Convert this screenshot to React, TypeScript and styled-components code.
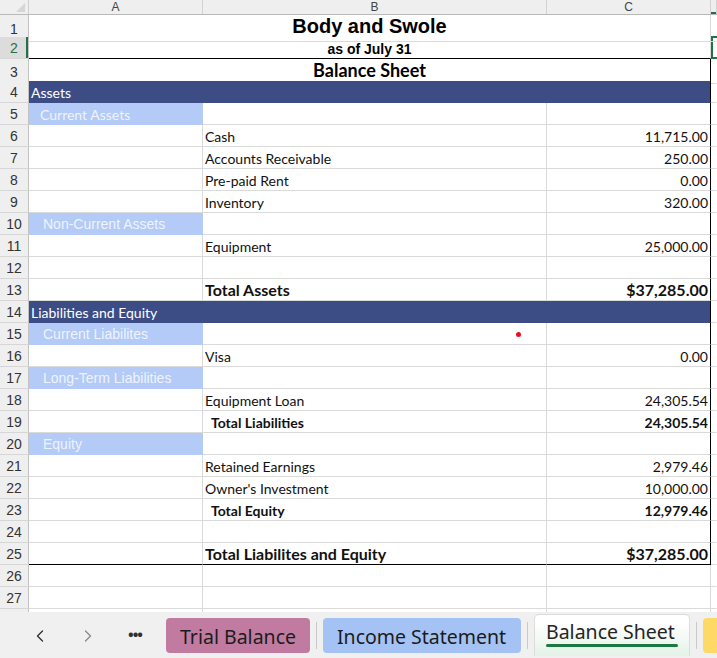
import React from "react";
import styled, { createGlobalStyle, css } from "styled-components";
import { ChevronLeft, ChevronRight } from "lucide-react";

const GlobalStyle = createGlobalStyle`
  html, body { margin: 0; padding: 0; background: #ffffff; }
  * { box-sizing: border-box; }
`;

const GRID = "#dadada";
const NAVY = "#3c4d85";
const SKY = "#b3cbf6";
const CALIBRI = `Lato, "Open Sans", sans-serif`;
const ARIAL = `"Liberation Sans", Arial, sans-serif`;

const Page = styled.div`
  width: 717px;
  height: 658px;
  display: flex;
  flex-direction: column;
  overflow: hidden;
  background: #fff;
`;

const Sheet = styled.div`
  flex: 1;
  overflow: hidden;
  display: flex;
  flex-direction: column;
`;

const cols = "29px 174px 344px 164px 1fr";

const HeaderRow = styled.div`
  display: grid;
  grid-template-columns: ${cols};
  height: 15px;
  flex: none;
  background: #efefef;
  border-bottom: 1px solid #b9b9b9;
`;

const Corner = styled.div`
  position: relative;
  border-right: 1px solid #cfcfcf;
  &::after {
    content: "";
    position: absolute;
    right: 3px;
    bottom: 2px;
    width: 0;
    height: 0;
    border-left: 9px solid transparent;
    border-bottom: 9px solid #d6d6d6;
  }
`;

const ColHead = styled.div<{ $active?: boolean }>`
  display: flex;
  align-items: center;
  justify-content: center;
  font-family: ${ARIAL};
  font-size: 12px;
  line-height: 1;
  color: #444;
  border-right: 1px solid #d2d2d2;
  ${(p) =>
    p.$active &&
    css`
      box-shadow: inset 0 -2px 0 #217346;
    `}
`;

const Row = styled.div`
  display: grid;
  grid-template-columns: ${cols};
  height: 22px;
  flex: none;
`;

const RowHead = styled.div<{ $active?: boolean }>`
  display: flex;
  align-items: center;
  justify-content: center;
  padding-top: 1px;
  font-family: ${ARIAL};
  font-size: 14px;
  color: ${(p) => (p.$active ? "#217346" : "#333")};
  background: ${(p) => (p.$active ? "#dcdcdc" : "#efefef")};
  border-right: 1px solid #c3c3c3;
  border-bottom: 1px solid #d6d6d6;
  ${(p) =>
    p.$active &&
    css`
      box-shadow: inset -2px 0 0 #217346;
    `}
`;

type CellProps = {
  $span?: number;
  $bg?: string;
  $align?: "left" | "center" | "right";
  $family?: string;
  $size?: number;
  $bold?: boolean;
  $color?: string;
  $indent?: number;
  $shift?: number;
  $bottom?: string;
  $right?: string;
};

const Cell = styled.div<CellProps>`
  position: relative;
  grid-column: span ${(p) => p.$span ?? 1};
  display: flex;
  align-items: center;
  justify-content: ${(p) =>
    p.$align === "right" ? "flex-end" : p.$align === "center" ? "center" : "flex-start"};
  padding: ${(p) => Math.max(0, 1 + (p.$shift ?? 0))}px 2px
    ${(p) => Math.max(0, -(p.$shift ?? 0))}px ${(p) => 2 + (p.$indent ?? 0)}px;
  background: ${(p) => p.$bg ?? "transparent"};
  font-family: ${(p) => p.$family ?? CALIBRI};
  font-size: ${(p) => p.$size ?? 14}px;
  font-weight: ${(p) => (p.$bold ? 700 : 400)};
  color: ${(p) => p.$color ?? "#000"};
  white-space: nowrap;
  overflow: visible;
  border-right: 1px solid ${(p) => p.$right ?? GRID};
  border-bottom: 1px solid ${(p) => p.$bottom ?? GRID};
`;

const ActiveCell = styled.div`
  border-top: 2px solid #217346;
  border-bottom: 2px solid #217346;
  border-left: 2px solid #217346;
  margin-top: -1px;
  height: 23px;
`;

const Dot = styled.span`
  position: absolute;
  left: 313px;
  top: 9px;
  width: 5px;
  height: 5px;
  border-radius: 50%;
  background: #e81123;
`;

/* Tab bar */
const TabBar = styled.div`
  height: 46px;
  flex: none;
  background: #f0f0f0;
  display: flex;
  align-items: flex-end;
  padding: 0 0 5px 28px;
  font-family: "Noto Sans", "Open Sans", sans-serif;
  overflow: hidden;
`;

const NavBtn = styled.div<{ $dim?: boolean }>`
  flex: none;
  width: 24px;
  height: 35px;
  display: flex;
  align-items: center;
  justify-content: center;
  color: ${(p) => (p.$dim ? "#8a8a8a" : "#303030")};
  margin-right: 24px;
`;

const More = styled.div`
  flex: none;
  width: 22px;
  height: 35px;
  display: flex;
  align-items: center;
  justify-content: center;
  font-size: 15px;
  letter-spacing: -1px;
  color: #303030;
  margin-right: 20px;
  padding-bottom: 4px;
  font-weight: 700;
`;

const Tab = styled.div<{ $bg: string; $w: number }>`
  height: 35px;
  width: ${(p) => p.$w}px;
  flex: none;
  border-radius: 4px;
  background: ${(p) => p.$bg};
  display: flex;
  align-items: center;
  padding: 2px 0 0 14px;
  font-size: 19.5px;
  color: #1b1b1b;
  white-space: nowrap;
  overflow: hidden;
`;

const ActiveTab = styled.div`
  position: relative;
  height: 42px;
  width: 156px;
  flex: none;
  margin-bottom: -3px;
  border: 1px solid #dcdcdc;
  border-bottom: none;
  border-radius: 5px 5px 0 0;
  background: linear-gradient(#ffffff 20%, #e4f2e7);
  display: flex;
  align-items: center;
  padding: 0 0 8px 11px;
  font-size: 19.5px;
  color: #242424;
  white-space: nowrap;
  &::after {
    content: "";
    position: absolute;
    left: 11px;
    right: 11px;
    bottom: 9px;
    height: 3px;
    border-radius: 2px;
    background: #1e7a45;
  }
`;

const Sep = styled.div`
  flex: none;
  width: 1px;
  height: 27px;
  margin: 0 6px 4px 6px;
  align-self: flex-end;
  background: #c9c9c9;
`;

type Line =
  | {
      kind: "title";
      text: string;
      family: string;
      size: number;
      shift: number;
      bottom?: string;
    }
  | { kind: "band"; text: string }
  | { kind: "group"; text: string; family: string; indent: number; dot?: boolean }
  | {
      kind: "item";
      label?: string;
      value?: string;
      bold?: boolean;
      size?: number;
      indent?: number;
      bottom?: string;
    };

const lines: Line[] = [
  { kind: "title", text: "Body and Swole", family: ARIAL, size: 20, shift: -3 },
  { kind: "title", text: "as of July 31", family: ARIAL, size: 14, shift: 2, bottom: "#000" },
  { kind: "title", text: "Balance Sheet", family: CALIBRI, size: 18, shift: -2 },
  { kind: "band", text: "Assets" },
  { kind: "group", text: "Current Assets", family: CALIBRI, indent: 9 },
  { kind: "item", label: "Cash", value: "11,715.00" },
  { kind: "item", label: "Accounts Receivable", value: "250.00" },
  { kind: "item", label: "Pre-paid Rent", value: "0.00" },
  { kind: "item", label: "Inventory", value: "320.00" },
  { kind: "group", text: "Non-Current Assets", family: ARIAL, indent: 12 },
  { kind: "item", label: "Equipment", value: "25,000.00" },
  { kind: "item" },
  { kind: "item", label: "Total Assets", value: "$37,285.00", bold: true, size: 16 },
  { kind: "band", text: "Liabilities and Equity" },
  { kind: "group", text: "Current Liabilites", family: ARIAL, indent: 12, dot: true },
  { kind: "item", label: "Visa", value: "0.00" },
  { kind: "group", text: "Long-Term Liabilities", family: ARIAL, indent: 12 },
  { kind: "item", label: "Equipment Loan", value: "24,305.54" },
  { kind: "item", label: "Total Liabilities", value: "24,305.54", bold: true, indent: 6 },
  { kind: "group", text: "Equity", family: ARIAL, indent: 12 },
  { kind: "item", label: "Retained Earnings", value: "2,979.46" },
  { kind: "item", label: "Owner's Investment", value: "10,000.00" },
  { kind: "item", label: "Total Equity", value: "12,979.46", bold: true, indent: 6 },
  { kind: "item" },
  {
    kind: "item",
    label: "Total Liabilites and Equity",
    value: "$37,285.00",
    bold: true,
    size: 16,
    bottom: "#000",
  },
];

function renderLine(line: Line, n: number) {
  const cRight = n >= 3 ? "#000" : GRID;
  const dCell = n === 2 ? <ActiveCell /> : <Cell $right="transparent" />;
  switch (line.kind) {
    case "title":
      return (
        <>
          <Cell
            $span={3}
            $align="center"
            $family={line.family}
            $size={line.size}
            $shift={line.shift}
            $bold
            $bottom={line.bottom}
            $right={cRight}
          >
            {line.text}
          </Cell>
          {dCell}
        </>
      );
    case "band":
      return (
        <>
          <Cell $span={3} $bg={NAVY} $color="#fff" $bottom={NAVY} $right="#000">
            {line.text}
          </Cell>
          {dCell}
        </>
      );
    case "group":
      return (
        <>
          <Cell
            $bg={SKY}
            $color="#eef3fd"
            $family={line.family}
            $size={14}
            $indent={line.indent}
            $bottom={SKY}
            $right={SKY}
          >
            {line.text}
          </Cell>
          <Cell>{line.dot && <Dot />}</Cell>
          <Cell $right={cRight} />
          {dCell}
        </>
      );
    case "item": {
      const shift = line.size ? -1 : 0;
      return (
        <>
          <Cell $bottom={line.bottom} />
          <Cell
            $bold={line.bold}
            $size={line.size}
            $indent={line.indent}
            $shift={shift}
            $bottom={line.bottom}
            $color="#111"
          >
            {line.label}
          </Cell>
          <Cell
            $align="right"
            $bold={line.bold}
            $size={line.size}
            $shift={shift}
            $bottom={line.bottom}
            $right={cRight}
            $color="#111"
          >
            {line.value}
          </Cell>
          {dCell}
        </>
      );
    }
  }
}

export default function App() {
  return (
    <Page>
      <GlobalStyle />
      <Sheet>
        <HeaderRow>
          <Corner />
          <ColHead>A</ColHead>
          <ColHead>B</ColHead>
          <ColHead>C</ColHead>
          <ColHead $active />
        </HeaderRow>
        {lines.map((line, i) => (
          <Row key={i}>
            <RowHead $active={i === 1}>{i + 1}</RowHead>
            {renderLine(line, i + 1)}
          </Row>
        ))}
        {[26, 27, 28].map((n) => (
          <Row key={n}>
            <RowHead>{n < 28 ? n : ""}</RowHead>
            <Cell />
            <Cell />
            <Cell />
            <Cell $right="transparent" />
          </Row>
        ))}
      </Sheet>
      <TabBar>
        <NavBtn>
          <ChevronLeft size={20} strokeWidth={1.6} />
        </NavBtn>
        <NavBtn $dim>
          <ChevronRight size={20} strokeWidth={1.6} />
        </NavBtn>
        <More>•••</More>
        <Tab $bg="#c27ba0" $w={144}>Trial Balance</Tab>
        <Sep />
        <Tab $bg="#a4c2f4" $w={198}>Income Statement</Tab>
        <Sep />
        <ActiveTab>Balance Sheet</ActiveTab>
        <Sep />
        <Tab $bg="#ffd966" $w={40} />
      </TabBar>
    </Page>
  );
}
